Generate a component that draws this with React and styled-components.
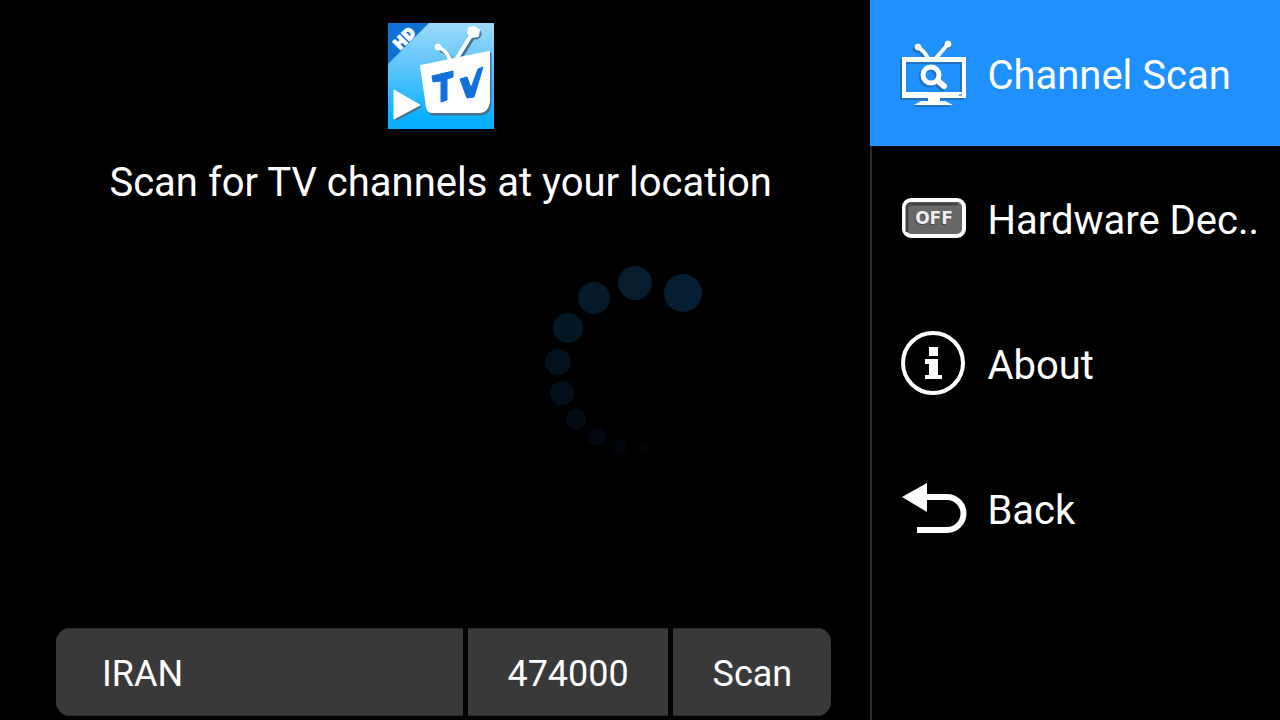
// Libraries
import { useState } from "react";
import styled, { createGlobalStyle } from "styled-components";

const GlobalStyle = createGlobalStyle`
  * {
    box-sizing: border-box;
  }

  body {
    margin: 0;
    background: #000;
    color: #fff;
    font-family: Roboto, "Liberation Sans", sans-serif;
  }
`;

const Screen = styled.div`
  display: flex;
  min-height: 100vh;
`;

const Main = styled.main`
  flex: 1;
  display: flex;
  flex-direction: column;
  align-items: center;
  padding: 23px 39px 4px 50px;
`;

const Title = styled.h1`
  margin: 30px 0 auto;
  font-size: 40px;
  font-weight: 400;
  line-height: 48px;
  text-align: center;
`;

const ScanBar = styled.form`
  display: flex;
  align-self: stretch;
  gap: 5px;
  margin-left: 6px;
  border-radius: 14px;
  overflow: hidden;
`;

const field = `
  height: 88px;
  border: 0;
  border-top: 1px solid #292929;
  border-bottom: 1px solid #292929;
  border-radius: 0;
  background: #393939;
  color: #fff;
  font-family: inherit;
  font-size: 36px;
  line-height: 44px;
`;

const Picker = styled.select`
  ${field}
  appearance: none;
  flex: ${(props) => (props.$grow ? "1" : "0 0 200px")};
  min-width: 0;
  padding: 3px 38px 0 ${(props) => (props.$grow ? "46px" : "39px")};
`;

const ScanButton = styled.button`
  ${field}
  flex: 0 0 158px;
  padding: 3px 0 0;
`;

const Sidebar = styled.nav`
  flex: 0 0 32%;
  border-left: 2px solid #292929;
`;

const MenuItem = styled.button`
  display: flex;
  align-items: center;
  gap: 19px;
  width: calc(100% + 2px);
  height: ${(props) => (props.$active ? "146px" : "145px")};
  margin-left: -2px;
  padding: 0 0 0 30px;
  border: 0;
  background: ${(props) => (props.$active ? "#1e90ff" : "transparent")};
  color: #fff;
  font-family: inherit;
  font-size: 40px;
  line-height: 48px;
  text-align: left;
  white-space: nowrap;

  svg {
    flex: none;
  }
`;

const MenuLabel = styled.span`
  padding-top: 5px;
`;

// Sits over the whole screen while a scan is being prepared
const SpinnerOverlay = styled.div`
  position: fixed;
  inset: 0;
  display: flex;
  align-items: center;
  justify-content: center;
  pointer-events: none;
`;

const AppLogo = () => (
  <svg width="106" height="106" viewBox="0 0 106 106" role="img" aria-label="HD TV">
    <defs>
      <linearGradient id="sky" x1="0" y1="0" x2="0" y2="1">
        <stop offset="0" stopColor="#9cdafa" />
        <stop offset="0.45" stopColor="#58c3fb" />
        <stop offset="0.9" stopColor="#08b0ff" />
      </linearGradient>
    </defs>
    <rect width="106" height="106" fill="url(#sky)" />
    <path d="M0 0H41L0 41Z" fill="#0f72d6" />
    <text
      x="16"
      y="21"
      transform="rotate(-45 16 15)"
      textAnchor="middle"
      fill="#fff"
      fontFamily="Open Sans, sans-serif"
      fontSize="16"
      fontWeight="800"
      stroke="#fff"
    >
      HD
    </text>
    <g fill="#47728f" stroke="#47728f" transform="translate(2 2)">
      <path d="M32 42Q65 35 101 28V79Q100 90 91 90H43Q39 90 38 84Z" strokeWidth="1" />
      <path d="M69 35L84 11M62 36Q58 27 50 25" fill="none" strokeWidth="4" />
      <circle cx="86" cy="9" r="5" />
      <path d="M6 67V96L32 82Z" stroke="none" />
    </g>
    <g fill="#fff" stroke="#fff" strokeLinejoin="round">
      <path d="M33 43Q66 36 101 29V78Q100 89 91 89H44Q40 89 39 84Z" strokeWidth="2" />
      <path d="M69 35L84 11M62 36Q58 27 50 24" fill="none" strokeWidth="4" strokeLinecap="round" />
      <path d="M81 5L86 4L91 7L90 13L84 14L80 10Z" strokeWidth="2" />
      <circle cx="50" cy="24" r="3" strokeWidth="1" />
      <path d="M6 67V96L32 82Z" strokeWidth="1" />
    </g>
    <g fill="#1070dc" stroke="#1070dc" strokeLinejoin="round">
      <path d="M44 53L65 48V54L59 56V77L53 79V58L45 59Z" />
      <path d="M72 56L79 54L83 65L90 46L95 44L86 74L79 75Z" />
    </g>
  </svg>
);

const TvScanIcon = () => {
  const drawing = (
    <>
      <path
        d="M2 20H66V61H40V64H45L53 68H14L21 64H28V61H2ZM6 25V55H62V25Z"
        fillRule="evenodd"
        stroke="none"
      />
      <path d="M18 10L24 15L28 21M48 7L36 21" fill="none" strokeWidth="4" strokeLinecap="round" />
      <circle cx="18" cy="10" r="3" />
      <circle cx="48" cy="7" r="3" />
      <circle cx="31" cy="38" r="8" fill="none" strokeWidth="5" />
      <path d="M38 44L44 49" fill="none" strokeWidth="6" strokeLinecap="round" />
    </>
  );
  return (
    <svg width="68" height="72" viewBox="0 0 68 72" overflow="visible" aria-hidden="true">
      <g fill="#2468a8" stroke="#2468a8" opacity="0.75" transform="translate(-2 2)">
        {drawing}
      </g>
      <g fill="#fff" stroke="#fff">
        {drawing}
      </g>
      <path d="M59 58H62" stroke="#7ba8d8" strokeWidth="2" />
    </svg>
  );
};

const OffIcon = () => (
  <svg width="68" height="42" viewBox="0 0 68 42" aria-hidden="true">
    <rect x="4" y="2" width="60" height="36" rx="7" fill="#686868" stroke="#fff" strokeWidth="4" />
    <path d="M7 34V10Q7 6 11 6H58" fill="none" stroke="#444" strokeWidth="3" />
    <g fontFamily="DejaVu Sans, sans-serif" fontSize="17" fontWeight="700" textAnchor="middle">
      <text x="33" y="27" fill="#444">OFF</text>
      <text x="34" y="26" fill="#eee">OFF</text>
    </g>
  </svg>
);

const InfoIcon = () => (
  <svg width="68" height="66" viewBox="0 0 68 66" aria-hidden="true">
    <circle cx="33" cy="32" r="30" fill="none" stroke="#fff" strokeWidth="4" />
    <path d="M29 16H38V25H29ZM25 28H38V44H42V48H25V44H29V33H25Z" fill="#fff" />
  </svg>
);

const BackIcon = () => (
  <svg width="68" height="52" viewBox="0 0 68 52" aria-hidden="true">
    <path d="M2 14L27 0V29Z" fill="#fff" />
    <path d="M25 14H47A16 16 0 0 1 47 47H17" fill="none" stroke="#fff" strokeWidth="6" />
  </svg>
);

const dots = [
  { x: 143, y: 33, r: 19, color: "#061e31" },
  { x: 95, y: 23, r: 17, color: "#061d2f" },
  { x: 54, y: 38, r: 16, color: "#051a2a" },
  { x: 28, y: 68, r: 15, color: "#041725" },
  { x: 18, y: 102, r: 13, color: "#03121f" },
  { x: 22, y: 133, r: 12, color: "#030f1a" },
  { x: 36, y: 159, r: 10, color: "#030c15" },
  { x: 57, y: 177, r: 9, color: "#02080f" },
  { x: 80, y: 187, r: 7, color: "#02060c" },
  { x: 103, y: 189, r: 5, color: "#020509" },
  { x: 124, y: 186, r: 2, color: "#010305" },
];

const Spinner = () => (
  <svg width="200" height="200" viewBox="0 0 200 200" role="img" aria-label="Loading">
    {dots.map((dot, index) => (
      <circle key={index} cx={dot.x} cy={dot.y} r={dot.r} fill={dot.color} />
    ))}
  </svg>
);

const menu = [
  { title: "Channel Scan", Icon: TvScanIcon },
  { title: "Hardware Dec..", Icon: OffIcon },
  { title: "About", Icon: InfoIcon },
  { title: "Back", Icon: BackIcon },
];

const App = () => {
  const [active, setActive] = useState(0);

  return (
    <Screen>
      <GlobalStyle />
      <Main>
        <AppLogo />
        <Title>Scan for TV channels at your location</Title>
        <ScanBar onSubmit={(e) => e.preventDefault()}>
          <Picker $grow aria-label="Country">
            <option>IRAN</option>
          </Picker>
          <Picker aria-label="Frequency">
            <option>474000</option>
          </Picker>
          <ScanButton type="submit">Scan</ScanButton>
        </ScanBar>
      </Main>
      <Sidebar>
        {menu.map(({ title, Icon }, index) => (
          <MenuItem
            key={title}
            type="button"
            $active={index === active}
            onClick={() => setActive(index)}
          >
            <Icon />
            <MenuLabel>{title}</MenuLabel>
          </MenuItem>
        ))}
      </Sidebar>
      <SpinnerOverlay>
        <Spinner />
      </SpinnerOverlay>
    </Screen>
  );
};

export default App;
